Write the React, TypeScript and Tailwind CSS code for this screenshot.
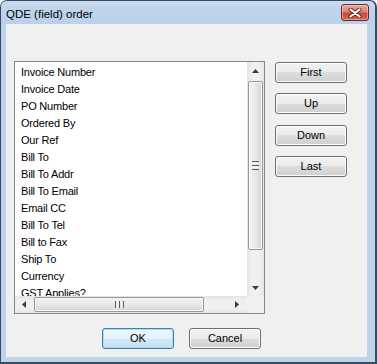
import React from 'react';

const fields = [
  'Invoice Number',
  'Invoice Date',
  'PO Number',
  'Ordered By',
  'Our Ref',
  'Bill To',
  'Bill To Addr',
  'Bill To Email',
  'Email CC',
  'Bill To Tel',
  'Bill to Fax',
  'Ship To',
  'Currency',
  'GST Applies?',
];

const Arrow: React.FC<{ dir: 'up' | 'down' | 'left' | 'right' }> = ({ dir }) => {
  const pts = {
    up: '0,4 7,4 3.5,0',
    down: '0,0 7,0 3.5,4',
    left: '4,0 4,7 0,3.5',
    right: '0,0 0,7 4,3.5',
  }[dir];
  const vertical = dir === 'up' || dir === 'down';
  return (
    <svg width={vertical ? 7 : 4} height={vertical ? 4 : 7} viewBox={vertical ? '0 0 7 4' : '0 0 4 7'}>
      <polygon points={pts} fill="#3a3a3a" />
    </svg>
  );
};

const Button: React.FC<{ label: string; primary?: boolean; className?: string }> = ({ label, primary, className }) => (
  <button
    className={`flex h-[21px] w-[72px] items-center justify-center rounded-[3px] border text-[11px] leading-none text-black ${
      primary
        ? 'border-[#3c7fb1] shadow-[inset_0_0_0_1px_#a9dbf6] bg-[linear-gradient(to_bottom,#eef7fc_0%,#e3f1fa_50%,#d3e8f5_50%,#c6e0f1_100%)]'
        : 'border-[#707070] shadow-[inset_0_0_0_1px_#fcfcfc] bg-[linear-gradient(to_bottom,#f2f2f2_0%,#ebebeb_50%,#dddddd_50%,#cfcfcf_100%)]'
    } ${className ?? ''}`}
  >
    {label}
  </button>
);

export default function App() {
  return (
    <div
      className="flex h-[364px] w-[377px] flex-col rounded-t-[7px] bg-[#3b4a5c] pb-[2px] pl-px pr-[2px] pt-px"
      style={{ fontFamily: '"Liberation Sans", Arial, sans-serif' }}
    >
      <div className="flex flex-1 flex-col rounded-t-[6px] bg-[#bcd3eb]">
        {/* title bar */}
        <div className="flex h-[23px] justify-between rounded-t-[6px] bg-[linear-gradient(to_bottom,#cadcf0_0%,#bfd5ec_30%,#b9d1ea_100%)]">
          <span className="pl-[5px] pt-[6px] text-[11.5px] leading-[14px] text-black">QDE (field) order</span>
          <div className="mr-[6px] mt-[3px] flex h-[17px] w-[28px] items-center justify-center rounded-[3px] border border-[#6b2a25] bg-[linear-gradient(to_bottom,#eaa697_0%,#dc8270_45%,#c8493c_55%,#d46a58_100%)] shadow-[inset_0_0_0_1px_rgba(255,255,255,0.35)]">
            <svg width="14" height="10" viewBox="0 0 14 10">
              <path d="M2.5 1.5 L11.5 8.5 M11.5 1.5 L2.5 8.5" stroke="#5a2420" strokeWidth="4" strokeLinecap="round" />
              <path d="M2.5 1.5 L11.5 8.5 M11.5 1.5 L2.5 8.5" stroke="#ffffff" strokeWidth="2.2" strokeLinecap="round" />
            </svg>
          </div>
        </div>

        {/* body */}
        <div className="flex flex-1 pb-[5px] pl-[5px] pr-[8px]">
          <div className="flex flex-1 flex-col bg-[#f0f0f0] pl-[8px] pt-[37px]">
            <div className="flex">
              {/* list box */}
              <div className="flex h-[253px] w-[251px] flex-col border border-[#828790] bg-white">
                <div className="flex flex-1 overflow-hidden">
                  <div className="flex-1 overflow-hidden pl-[6px] pt-[2px]">
                    {fields.map(f => (
                      <div key={f} className="h-[17px] whitespace-nowrap text-[11px] leading-[17px] tracking-[-0.2px] text-black">
                        {f}
                      </div>
                    ))}
                  </div>
                  {/* vertical scrollbar */}
                  <div className="flex w-[17px] flex-col bg-[linear-gradient(to_right,#e3e3e3,#f0f0f0_30%,#f0f0f0_70%,#e6e6e6)]">
                    <div className="flex h-[17px] items-center justify-center">
                      <Arrow dir="up" />
                    </div>
                    <div className="mx-px mt-[2px] flex h-[169px] items-center justify-center rounded-[2px] border border-[#979797] bg-[linear-gradient(to_right,#f3f3f3,#e8e8e8_50%,#d6d6d6)] shadow-[inset_0_0_0_1px_#fafafa]">
                      <div className="flex flex-col gap-[1px]">
                        <div className="h-px w-[7px] bg-[#5e5e5e]" />
                        <div className="h-px w-[7px] bg-[#fafafa]" />
                        <div className="h-px w-[7px] bg-[#5e5e5e]" />
                        <div className="h-px w-[7px] bg-[#fafafa]" />
                        <div className="h-px w-[7px] bg-[#5e5e5e]" />
                      </div>
                    </div>
                    <div className="flex-1" />
                    <div className="flex h-[17px] items-center justify-center">
                      <Arrow dir="down" />
                    </div>
                  </div>
                </div>
                {/* horizontal scrollbar */}
                <div className="flex h-[17px]">
                  <div className="flex flex-1 bg-[linear-gradient(to_bottom,#e3e3e3,#f0f0f0_30%,#f0f0f0_70%,#e6e6e6)]">
                    <div className="flex w-[17px] items-center justify-center">
                      <Arrow dir="left" />
                    </div>
                    <div className="my-px ml-[2px] flex w-[170px] items-center justify-center rounded-[2px] border border-[#979797] bg-[linear-gradient(to_bottom,#f3f3f3,#e8e8e8_50%,#d6d6d6)] shadow-[inset_0_0_0_1px_#fafafa]">
                      <div className="flex gap-[1px]">
                        <div className="h-[7px] w-px bg-[#5e5e5e]" />
                        <div className="h-[7px] w-px bg-[#fafafa]" />
                        <div className="h-[7px] w-px bg-[#5e5e5e]" />
                        <div className="h-[7px] w-px bg-[#fafafa]" />
                        <div className="h-[7px] w-px bg-[#5e5e5e]" />
                      </div>
                    </div>
                    <div className="flex-1" />
                    <div className="flex w-[17px] items-center justify-center pr-[3px]">
                      <Arrow dir="right" />
                    </div>
                  </div>
                  <div className="w-[17px] bg-[#f0f0f0]" />
                </div>
              </div>

              {/* move buttons */}
              <div className="ml-[10px] mt-px flex flex-col">
                <Button label="First" />
                <Button label="Up" className="mt-[10px]" />
                <Button label="Down" className="mt-[11px]" />
                <Button label="Last" className="mt-[10px]" />
              </div>
            </div>

            <div className="ml-[88px] mt-[14px] flex gap-[15px]">
              <Button label="OK" primary />
              <Button label="Cancel" />
            </div>
          </div>
        </div>
      </div>
    </div>
  );
}
